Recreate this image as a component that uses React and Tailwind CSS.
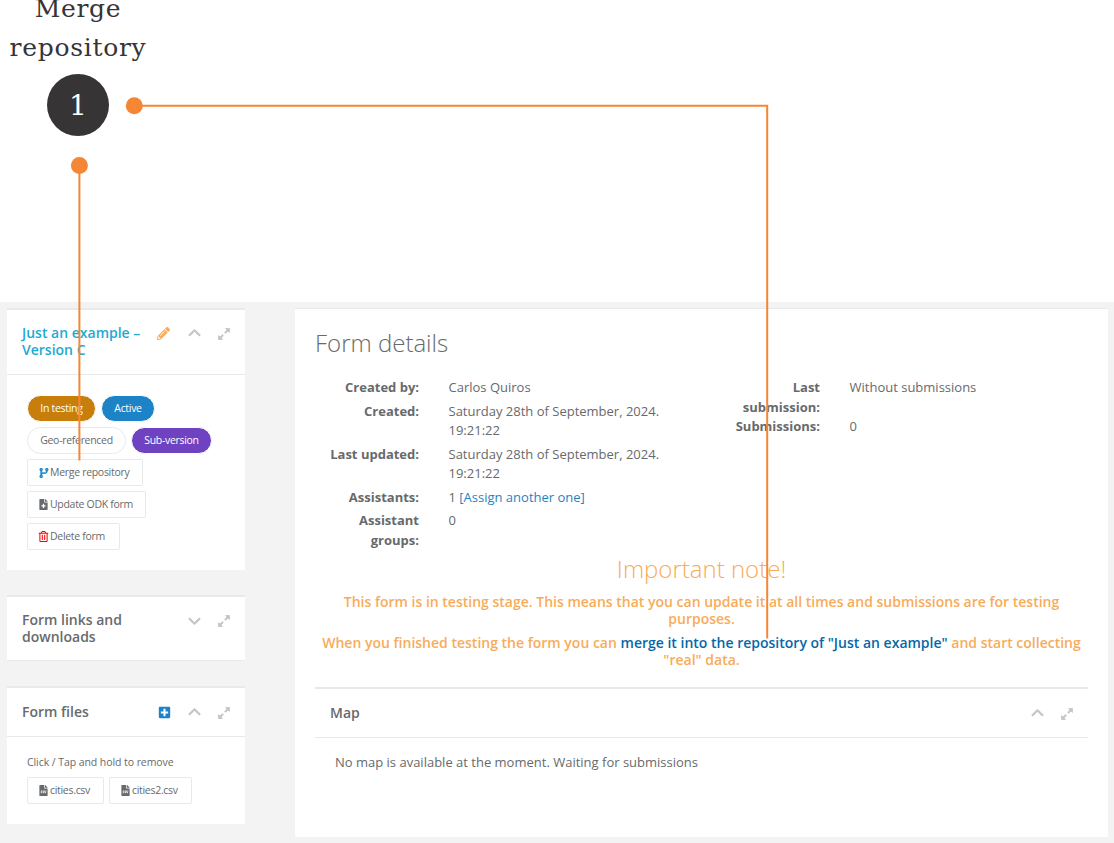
import { FaPencilAlt, FaFileMedical, FaFileCsv, FaRegTrashAlt, FaPlusSquare } from "react-icons/fa";
import { FaChevronUp, FaChevronDown, FaCodeBranch } from "react-icons/fa6";

function ExpandIcon() {
  return (
    <svg width="12" height="12" viewBox="0 0 12 12" fill="currentColor" stroke="currentColor">
      <path d="M7.6 0.5H11.5V4.4ZM0.5 7.6V11.5H4.4Z" strokeWidth="0.8" strokeLinejoin="round" />
      <path d="M10 2L6.9 5.1M5.1 6.9L2 10" strokeWidth="2" />
    </svg>
  );
}

function Tools({ extra, open = true }) {
  const Chevron = open ? FaChevronUp : FaChevronDown;
  return (
    <div className="flex h-[19px] shrink-0 items-center text-[#c4c4c4]">
      {extra && <span className="flex w-[30px] justify-center">{extra}</span>}
      <span className="flex w-[30px] justify-center">
        <Chevron size={13} stroke="currentColor" strokeWidth={28} />
      </span>
      <span className="flex w-[30px] justify-center"><ExpandIcon /></span>
    </div>
  );
}

function CardTitle({ children, extra, open, height, pad = "pt-[15px]" }) {
  return (
    <div className={`flex justify-between border-t-2 border-b border-[#e7eaec] pl-[15px] pr-[6px] ${pad} ${height}`}>
      <h5 className="text-[14px] font-semibold leading-[17px]">{children}</h5>
      <Tools extra={extra} open={open} />
    </div>
  );
}

function Pill({ children, className }) {
  return (
    <span className={`flex h-[27px] items-center justify-center rounded-full border text-[10.5px] tracking-[-0.3px] ${className}`}>
      {children}
    </span>
  );
}

function Btn({ icon, children, className }) {
  return (
    <button className={`flex h-[27px] items-center justify-start gap-[1px] whitespace-nowrap rounded-[2px] border border-[#e7eaec] bg-white pl-[11px] text-[10.5px] tracking-[-0.3px] ${className}`}>
      {icon}
      {children}
    </button>
  );
}

function Row({ label, children, height }) {
  return (
    <div className={`flex gap-[29.5px] ${height}`}>
      <dt className="w-[104px] shrink-0 text-right font-bold leading-5">{label}</dt>
      <dd className="w-[235px] pt-px leading-[19px]">{children}</dd>
    </div>
  );
}

export default function App() {
  return (
    <div className="relative h-[843px] w-[1114px] overflow-hidden bg-white font-['Open_Sans',sans-serif] text-[13px] text-[#676a6c]">
      <header className="flex h-[302px] w-[156px] flex-col items-center text-[#373435]">
        <p className="-mt-[11px] text-center font-['DejaVu_Serif',serif] text-[25px] leading-[39px] tracking-[0.7px]">
          Merge<br />repository
        </p>
        <div className="mt-[7px] flex size-[62px] items-center justify-center rounded-full bg-[#373435] pt-px font-['DejaVu_Serif',serif] text-[28px] text-white">
          1
        </div>
      </header>

      <main className="flex h-[541px] items-start justify-between bg-[#f3f3f4] pl-[7px] pr-[6px] pt-[6px]">
        <aside className="w-[238px]">
          <section className="h-[262px] bg-white">
            <CardTitle height="h-[67px]" pad="pt-[14px]" extra={<FaPencilAlt size={13} className="-ml-px text-[#f8ac59]" />}>
              <span className="text-[#23a9d1]">Just an example –<br />Version C</span>
            </CardTitle>
            <div className="flex flex-col gap-[5px] px-5 pt-5">
              <div className="flex gap-[5px]">
                <Pill className="w-[69px] border-white bg-[#c77e0a] text-white">In testing</Pill>
                <Pill className="w-[54px] border-white bg-[#1c84c6] text-white">Active</Pill>
              </div>
              <div className="flex gap-[5px]">
                <Pill className="w-[99px] border-[#e7eaec] bg-white">Geo-referenced</Pill>
                <Pill className="w-[81px] border-white bg-[#6f42c1] text-white">Sub-version</Pill>
              </div>
              <Btn className="w-[116px]" icon={<FaCodeBranch size={10} className="text-[#1c84c6]" stroke="currentColor" strokeWidth={20} />}>Merge repository</Btn>
              <Btn className="w-[119px]" icon={<FaFileMedical size={11} className="-ml-px" />}>Update ODK form</Btn>
              <Btn className="w-[93px]" icon={<FaRegTrashAlt size={11} className="-ml-px text-[#ff0000]" />}>Delete form</Btn>
            </div>
          </section>

          <section className="mt-[25px] bg-white">
            <CardTitle height="h-[66px]" pad="pt-[14px]" open={false}>Form links and<br />downloads</CardTitle>
          </section>

          <section className="mt-[25px] h-[138px] bg-white">
            <CardTitle height="h-[51px]" extra={<FaPlusSquare size={13} className="text-[#1c84c6]" />}>Form files</CardTitle>
            <div className="px-5 pt-4">
              <p className="text-[10.5px] leading-[19px] tracking-[-0.07px]">Click / Tap and hold to remove</p>
              <div className="mt-[5px] flex gap-[5px]">
                <Btn className="w-[77px]" icon={<FaFileCsv size={11} className="-ml-px" />}>cities.csv</Btn>
                <Btn className="w-[83px]" icon={<FaFileCsv size={11} className="-ml-px" />}>cities2.csv</Btn>
              </div>
            </div>
          </section>
        </aside>

        <section className="h-[529px] w-[813px] border-t border-[#e7eaec] bg-white px-5 pt-[19px]">
          <h2 className="text-[24px] font-light leading-[29px]">Form details</h2>
          <div className="mt-5 flex h-[177px]">
            <dl className="w-[401px]">
              <Row label="Created by:" height="h-6">Carlos Quiros</Row>
              <Row label="Created:" height="h-[43px]">Saturday 28th of September, 2024. 19:21:22</Row>
              <Row label="Last updated:" height="h-[43px]">Saturday 28th of September, 2024. 19:21:22</Row>
              <Row label="Assistants:" height="h-[23px]">1 <a className="text-[#1c84c6]">[Assign another one]</a></Row>
              <Row label={<>Assistant<br />groups:</>} height="h-10">0</Row>
            </dl>
            <dl>
              <Row label={<>Last<br />submission:</>} height="h-[39px]">Without submissions</Row>
              <Row label="Submissions:" height="h-5">0</Row>
            </dl>
          </div>
          <div className="text-center text-[#f8ac59]">
            <h2 className="text-[24px] font-light leading-[29px]">Important note!</h2>
            <h4 className="mt-[10px] text-[14px] font-semibold leading-[17px]">
              This form is in testing stage. This means that you can update it at all times and submissions are for testing purposes.
            </h4>
            <h4 className="mt-[7px] text-[14px] font-semibold leading-[17px]">
              When you finished testing the form you can <a className="text-[#0668a8]">merge it into the repository of "Just an example"</a> and start collecting "real" data.
            </h4>
          </div>
          <div className="mt-[19px]">
            <CardTitle height="h-[51px]">Map</CardTitle>
            <p className="px-5 pt-[15px] leading-[19.5px]">No map is available at the moment. Waiting for submissions</p>
          </div>
        </section>
      </main>

      {/* Callout lines drawn over the page */}
      <svg className="pointer-events-none absolute inset-0" width="1114" height="843" fill="none" stroke="#f58634" strokeWidth="2">
        <path d="M134 105.8H767.2V638.5" />
        <path d="M79.4 166V460.5" />
        <circle cx="134.3" cy="105.8" r="8.5" fill="#f58634" stroke="none" />
        <circle cx="79.4" cy="165.6" r="8.5" fill="#f58634" stroke="none" />
      </svg>
    </div>
  );
}
